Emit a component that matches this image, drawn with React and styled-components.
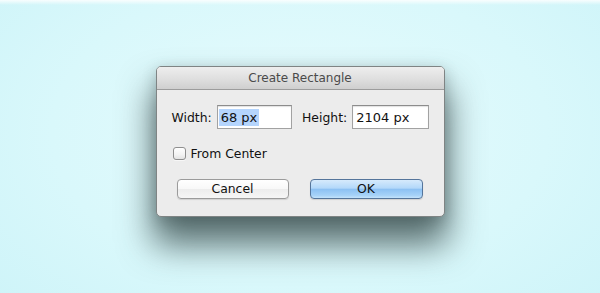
import styled, { createGlobalStyle } from "styled-components";

const Global = createGlobalStyle`
  html, body {
    margin: 0;
    padding: 0;
  }
  body {
    font-family: "DejaVu Sans", "Liberation Sans", sans-serif;
    font-size: 12.4px;
    color: #111;
  }
`;

const Page = styled.div`
  width: 600px;
  height: 293px;
  display: flex;
  justify-content: center;
  align-items: flex-start;
  padding-top: 66px;
  box-sizing: border-box;
  background:
    linear-gradient(to bottom, rgba(255, 255, 255, 0.85) 0px, rgba(255, 255, 255, 0) 5px),
    radial-gradient(ellipse 75% 95% at 50% 45%, #e7fbfd 0%, #d9f8fb 55%, #cbf3f8 100%);
`;

const Dialog = styled.div`
  width: 289px;
  box-sizing: border-box;
  border: 1px solid #7f8484;
  border-radius: 5px;
  overflow: hidden;
  background: #ececec;
  box-shadow:
    0 25px 34px 3px rgba(45, 65, 65, 0.75),
    0 4px 14px rgba(40, 60, 60, 0.25);
`;

const TitleBar = styled.div`
  height: 22px;
  line-height: 22px;
  text-align: center;
  color: #4a4a4a;
  font-size: 12px;
  background: linear-gradient(to bottom, #eeeeee 0%, #e0e0e0 50%, #cfcfcf 100%);
  border-bottom: 1px solid #9c9c9c;
`;

const Body = styled.div`
  padding: 15px 15px 17px 15px;
  display: flex;
  flex-direction: column;
`;

const FieldRow = styled.div`
  display: flex;
  align-items: center;
  height: 24px;
`;

const Label = styled.span`
  margin-right: 5px;
  margin-left: ${(p) => (p.$spaced ? "10px" : "0")};
`;

const Field = styled.div`
  width: ${(p) => p.$w}px;
  height: 24px;
  box-sizing: border-box;
  border: 1px solid #a2a2a2;
  border-top-color: #8c8c8c;
  background: #fff;
  box-shadow: inset 0 1px 1px rgba(0, 0, 0, 0.12);
  display: flex;
  align-items: center;
  padding-left: 1px;
  font-size: 13px;
  color: #111;
`;

const Value = styled.span`
  padding: 1px 2px;
  background: ${(p) => (p.$selected ? "#b5d5fd" : "transparent")};
`;

const CheckRow = styled.label`
  display: flex;
  align-items: center;
  margin-top: 18px;
  height: 13px;
  padding-left: 1px;
  gap: 5px;
`;

const Box = styled.span`
  width: 13px;
  height: 13px;
  box-sizing: border-box;
  border: 1px solid #8f8f8f;
  border-radius: 3px;
  background: linear-gradient(to bottom, #ffffff 0%, #f3f3f3 60%, #e4e4e4 100%);
  box-shadow: 0 1px 0 rgba(255, 255, 255, 0.6);
`;

const ButtonRow = styled.div`
  display: flex;
  justify-content: space-between;
  margin-top: 19px;
  padding: 0 6px 0 5px;
`;

const Button = styled.button`
  all: unset;
  width: ${(p) => p.$w}px;
  height: 20px;
  box-sizing: border-box;
  text-align: center;
  line-height: 18px;
  font-family: "DejaVu Sans", "Liberation Sans", sans-serif;
  font-size: 12.4px;
  color: #111;
  border-radius: 4px;
  border: 1px solid ${(p) => (p.$primary ? "#55759b" : "#9b9b9b")};
  background: ${(p) =>
    p.$primary
      ? "linear-gradient(to bottom, #d6eafc 0%, #b3d8fa 45%, #8dc1f3 52%, #a6d2f8 85%, #c4e3fc 100%)"
      : "linear-gradient(to bottom, #ffffff 0%, #f8f8f8 50%, #ededed 52%, #f6f6f6 100%)"};
  box-shadow: 0 1px 1px rgba(0, 0, 0, 0.12);
`;

export default function App() {
  return (
    <Page>
      <Global />
      <Dialog>
        <TitleBar>Create Rectangle</TitleBar>
        <Body>
          <FieldRow>
            <Label>Width:</Label>
            <Field $w={76}>
              <Value $selected>68 px</Value>
            </Field>
            <Label $spaced>Height:</Label>
            <Field $w={77}>
              <Value>2104 px</Value>
            </Field>
          </FieldRow>
          <CheckRow>
            <Box />
            <span>From Center</span>
          </CheckRow>
          <ButtonRow>
            <Button $w={112}>Cancel</Button>
            <Button $w={113} $primary>
              OK
            </Button>
          </ButtonRow>
        </Body>
      </Dialog>
    </Page>
  );
}
